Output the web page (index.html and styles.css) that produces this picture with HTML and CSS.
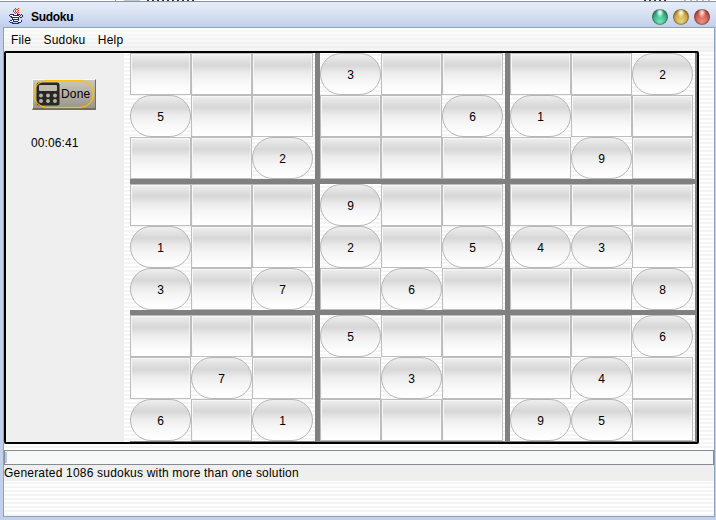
FILE: index.html
```
<!DOCTYPE html>
<html lang="en">
<head>
<meta charset="utf-8">
<title>Sudoku</title>
<link rel="stylesheet" href="styles.css">
</head>
<body>
<div class="backdrop"></div>
<div class="window">
  <header class="titlebar">
    <svg class="cup" width="16" height="18" viewBox="0 0 16 18" fill="none" shape-rendering="crispEdges">
      <path d="M2 7h10v3h-2v5h-6v-5h-2zM1 13h13v2h-13z" fill="#fff"/>
      <path d="M7 1h1M10 1h1M6 2h1M8 2h2M5 3h1M7 3h1M10 3h1M5 4h1M7 4h1M9 4h1M6 5h1M8 5h1M10 5h1M7 6h1M9 6h1" transform="translate(0 .5)" stroke="#f02b36"/>
      <path d="M2 7h4M9 7h3M13 7h1M1 8h1M5 8h6M12 8h1M14 8h1M2 9h2M11 9h1M14 9h1M3 10h8M12 10h2M4 11h1M10 11h1M4 12h7M2 13h2M5 13h1M10 13h1M13 13h1M1 14h1M5 14h5M13 14h1M2 15h3M10 15h3M4 16h7" transform="translate(0 .5)" stroke="#20267c"/>
    </svg>
    <h1>Sudoku</h1>
    <div class="controls"><i class="orb green"></i><i class="orb gold"></i><i class="orb red"></i></div>
  </header>
  <main class="content">
    <nav class="menu"><span>File</span><span>Sudoku</span><span>Help</span></nav>
    <section class="game">
      <aside class="side">
        <button class="done">
          <svg width="24" height="24" viewBox="0 0 24 24">
            <rect x=".5" y=".5" width="23" height="23" rx="2.5" fill="#292724"/>
            <rect x="3" y="3" width="18" height="6" rx="1" fill="#c1bbb0"/>
            <g fill="#b8b1a5"><circle cx="5" cy="13.5" r="2"/><circle cx="12" cy="13.5" r="2"/><circle cx="19" cy="13.5" r="2"/><circle cx="5" cy="19" r="2"/><circle cx="12" cy="19" r="2"/><circle cx="19" cy="19" r="2"/></g>
          </svg><span>Done</span>
        </button>
        <div class="timer">00:06:41</div>
      </aside>
      <div class="board" id="board"></div>
    </section>
    <div class="progress"><i></i></div>
    <footer class="status">Generated 1086 sudokus with more than one solution</footer>
  </main>
</div>
<script src="board.js"></script>
</body>
</html>
```
FILE: styles.css
```
* { box-sizing: border-box; }
body {
  margin: 0;
  width: 716px;
  height: 520px;
  overflow: hidden;
  font: 12px/14px "Liberation Sans", Arial, sans-serif;
  color: #000;
  background: #fff;
}
.backdrop {
  height: 1px;
  background:
    linear-gradient(90deg, transparent 115px, #999 115px 116px, transparent 116px 124px, #c5ccd1 124px 140px, transparent 140px),
    repeating-linear-gradient(90deg, #333 0 2px, #fff 2px 5px) 147px 0 / 48px 1px no-repeat,
    repeating-linear-gradient(90deg, #433 0 2px, #fff 2px 5px) 644px 0 / 23px 1px no-repeat,
    repeating-linear-gradient(90deg, #bbb 0 2px, #fff 2px 6px) 684px 0 / 28px 1px no-repeat;
}
.window {
  height: 519px;
  display: flex;
  flex-direction: column;
  background: #c1d1ec;
  border-top: 1px solid #8494a6;
}
.titlebar {
  height: 25px;
  flex: none;
  display: flex;
  align-items: center;
  padding: 4px 6px 0 8px;
  background: linear-gradient(#e6ecf8, #dbe3f3 40%, #c0cfea);
}
.cup { margin-top: -1px; }
h1 { margin: 0 0 0 7px; font-size: 12px; line-height: 14px; letter-spacing: -.3px; }
.controls { margin-left: auto; display: flex; gap: 5px; }
.orb {
  width: 16px;
  height: 16px;
  border-radius: 50%;
  box-shadow: inset 0 0 2px 1px rgba(60, 50, 50, .65);
}
.green { background: radial-gradient(ellipse at 50% 18%, #d5fff0 0 8%, transparent 36%), radial-gradient(circle at 50% 90%, #83efc0, #2fae80 60%, #218963); }
.gold { background: radial-gradient(ellipse at 50% 18%, #fff4c4 0 8%, transparent 36%), radial-gradient(circle at 50% 90%, #f1dc83, #c9a545 60%, #9b7b29); }
.red { background: radial-gradient(ellipse at 50% 18%, #ffd5cb 0 8%, transparent 36%), radial-gradient(circle at 50% 90%, #f5998a, #cc5549 60%, #9e332d); }
.content {
  flex: 1;
  margin: 0 1px 3px 3px;
  border: 1px solid #8fa2bb;
  display: flex;
  flex-direction: column;
  background: repeating-linear-gradient(#fff 0 2px, #f4f4f4 2px 4px);
}
.menu {
  height: 23px;
  flex: none;
  display: flex;
  gap: 12.5px;
  padding: 5px 7px 0;
  letter-spacing: .18px;
  background: linear-gradient(rgba(255, 255, 255, .6), rgba(232, 232, 232, .5)), repeating-linear-gradient(#fff 0 2px, #f2f2f2 2px 4px);
}
.game {
  width: 695px;
  height: 393px;
  flex: none;
  display: flex;
  border: 2px solid #000;
  border-radius: 2px;
}
.side {
  width: 118px;
  flex: none;
  padding: 26px 0 0 25px;
  background: #efefef;
}
.done {
  width: 64px;
  height: 31px;
  position: relative;
  margin-left: 1px;
  display: flex;
  align-items: center;
  padding: 0 0 0 3px;
  border: 1px solid;
  border-width: 1px 1px 2px 1px;
  border-color: #f8f8f7 #716d66 #716d66 #f8f8f7;
  background: linear-gradient(#cbc6bc, #9b958a);
  font: inherit;
}
.done span { letter-spacing: .2px; margin-left: 1px; }
.done::after {
  content: "";
  position: absolute;
  inset: 0 1px 0 0;
  border: 1.5px solid #ffbf0a;
  border-radius: 14px;
  box-shadow: 0 0 1px #ffbf0a, inset 0 0 1px #ffbf0a;
}
.timer { margin-top: 26px; letter-spacing: .1px; }
.board {
  flex: 1;
  overflow: hidden;
  padding-left: 6px;
  display: grid;
  grid-template-columns: repeat(3, 190px);
  grid-template-rows: repeat(3, 131px);
}
.block {
  display: grid;
  grid-template-columns: repeat(3, 61px);
  grid-template-rows: repeat(3, 42px);
  border: solid #808080;
  border-width: 0 5px 5px 0;
}
.cell {
  border: 1px solid #bdbdbd;
  box-shadow: inset 1px 1px #f7f7f7, inset -1px 0 rgba(255, 255, 255, .5);
  background: linear-gradient(#efefef 0, #e2e2e2 14%, #d7d7d7 28%, #eaeaea 46%, #f5f5f5 65%, #fdfdfd 88%, #fff);
  text-align: center;
  line-height: 42px;
}
.cell.given {
  border-color: #b6b6b6;
  border-radius: 21px;
  box-shadow: none;
}
.progress {
  height: 15px;
  flex: none;
  margin-top: 6px;
  padding: 1px 0;
  border: 1px solid #868b91;
  background: #f8f8f8;
}
.progress i { display: block; width: 2px; height: 11px; background: #a9cdec; }
.status { height: 16px; flex: none; line-height: 16px; letter-spacing: .2px; background: #efefef; }
```
FILE: board.js
```
const rows = [
  "...3....2",
  "5....61..",
  "..2....9.",
  "...9.....",
  "1..2.543.",
  "3.7.6...8",
  "...5....6",
  ".7..3..4.",
  "6.1...95."
];
const board = document.getElementById("board");
for (let b = 0; b < 9; b++) {
  const block = document.createElement("div");
  block.className = "block";
  for (let i = 0; i < 9; i++) {
    const row = Math.floor(b / 3) * 3 + Math.floor(i / 3);
    const value = rows[row][(b % 3) * 3 + i % 3];
    const cell = document.createElement("div");
    cell.className = value === "." ? "cell" : "cell given";
    cell.textContent = value === "." ? "" : value;
    block.append(cell);
  }
  board.append(block);
}
```
